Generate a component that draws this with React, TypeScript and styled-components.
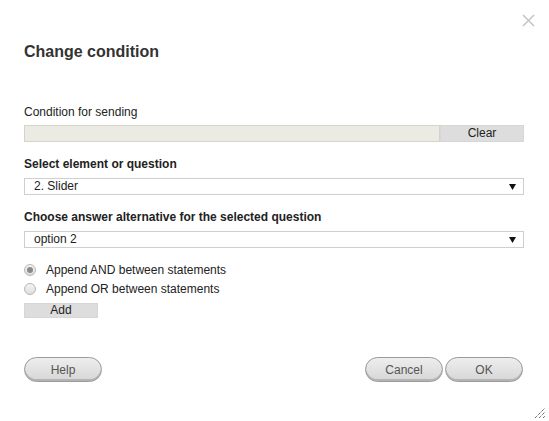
import * as React from "react";
import styled, { createGlobalStyle } from "styled-components";

const GlobalStyle = createGlobalStyle`
  html, body {
    margin: 0;
    padding: 0;
    background: #fff;
  }
  body {
    font-family: "Liberation Sans", Arial, sans-serif;
    font-size: 12px;
    color: #222;
  }
`;

const Dialog = styled.div`
  position: relative;
  box-sizing: border-box;
  width: 549px;
  height: 421px;
  padding: 42px 25px 0 24px;
  display: flex;
  flex-direction: column;
  background: #fff;
`;

const CloseButton = styled.button`
  position: absolute;
  top: 14px;
  right: 14px;
  width: 13px;
  height: 13px;
  padding: 0;
  border: 0;
  background: none;
  cursor: pointer;
`;

const Title = styled.h2`
  margin: 0;
  font-size: 16px;
  line-height: 20px;
  font-weight: bold;
  color: #333;
`;

const Label = styled.div<{ $bold?: boolean; $top: number }>`
  margin-top: ${(p) => p.$top}px;
  font-size: 12px;
  line-height: 14px;
  font-weight: ${(p) => (p.$bold ? "bold" : "normal")};
  color: #222;
`;

const ConditionRow = styled.div`
  display: flex;
  margin-top: 6px;
  height: 17px;
`;

const ConditionField = styled.input`
  flex: 1;
  box-sizing: border-box;
  height: 17px;
  margin: 0;
  border: 1px solid #d4d4cc;
  background: #ebebe4;
  outline: none;
`;

const FlatButton = styled.button<{ $width?: number }>`
  box-sizing: border-box;
  width: ${(p) => (p.$width ? `${p.$width}px` : "auto")};
  height: ${(p) => (p.$width ? "15px" : "17px")};
  margin: 0;
  padding: 0;
  border: 1px solid #d6d6d6;
  background: #dddddd;
  font-family: "Liberation Sans", Arial, sans-serif;
  font-size: 12px;
  line-height: 13px;
  color: #222;
  cursor: pointer;
`;

const SelectWrap = styled.div`
  position: relative;
  margin-top: 7px;
  height: 17px;
`;

const Select = styled.select`
  appearance: none;
  box-sizing: border-box;
  width: 100%;
  height: 17px;
  margin: 0;
  padding: 0 0 0 9px;
  border: 1px solid #cfcfcf;
  background: #fff;
  font-family: "Liberation Sans", Arial, sans-serif;
  font-size: 12px;
  line-height: 15px;
  color: #222;
  outline: none;
`;

const Arrow = styled.svg`
  position: absolute;
  right: 8px;
  top: 6px;
  pointer-events: none;
`;

const RadioGroup = styled.div`
  display: flex;
  flex-direction: column;
  gap: 5px;
  margin-top: 15px;
`;

const RadioLabel = styled.label`
  display: flex;
  align-items: center;
  height: 14px;
  font-size: 12px;
  color: #222;
  cursor: pointer;
`;

const Radio = styled.input`
  appearance: none;
  box-sizing: border-box;
  width: 12px;
  height: 12px;
  margin: 0 10px 0 0;
  border: 1px solid #b7b7b7;
  border-radius: 50%;
  background: linear-gradient(#f4f4f4, #dedede);
  display: grid;
  place-items: center;

  &:checked::after {
    content: "";
    width: 6px;
    height: 6px;
    border-radius: 50%;
    background: #8a8a8a;
  }
`;

const AddRow = styled.div`
  margin-top: 7px;
`;

const Footer = styled.div`
  display: flex;
  justify-content: space-between;
  margin-top: 39px;
  padding-right: 1px;
`;

const ButtonGroup = styled.div`
  display: flex;
  gap: 2px;
`;

const PillButton = styled.button`
  box-sizing: border-box;
  width: 78px;
  height: 25px;
  margin: 0;
  padding: 0;
  border: 1px solid #9a9a9a;
  border-radius: 13px;
  background: linear-gradient(#eeeeee, #d6d6d6);
  box-shadow: inset 0 -2px 0 #b4b4b4;
  font-family: "Liberation Sans", Arial, sans-serif;
  font-size: 12px;
  color: #555;
  cursor: pointer;
`;

const Grip = styled.svg`
  position: absolute;
  right: 3px;
  bottom: 2px;
`;

export default function App() {
  return (
    <>
      <GlobalStyle />
      <Dialog>
        <CloseButton aria-label="Close">
          <svg width="13" height="13" viewBox="0 0 13 13">
            <path d="M1 1 L12 12 M12 1 L1 12" stroke="#c4c4c4" strokeWidth="1.5" />
          </svg>
        </CloseButton>
        <Title>Change condition</Title>

        <Label $top={43}>Condition for sending</Label>
        <ConditionRow>
          <ConditionField disabled />
          <FlatButton style={{ width: 84 }}>Clear</FlatButton>
        </ConditionRow>

        <Label $bold $top={15}>Select element or question</Label>
        <SelectWrap>
          <Select defaultValue="2">
            <option value="2">2. Slider</option>
          </Select>
          <Arrow width="7" height="6" viewBox="0 0 7 6">
            <path d="M0 0 H7 L3.5 6 Z" fill="#111" />
          </Arrow>
        </SelectWrap>

        <Label $bold $top={15}>Choose answer alternative for the selected question</Label>
        <SelectWrap>
          <Select defaultValue="o2">
            <option value="o2">option 2</option>
          </Select>
          <Arrow width="7" height="6" viewBox="0 0 7 6">
            <path d="M0 0 H7 L3.5 6 Z" fill="#111" />
          </Arrow>
        </SelectWrap>

        <RadioGroup>
          <RadioLabel>
            <Radio type="radio" name="join" defaultChecked />
            Append AND between statements
          </RadioLabel>
          <RadioLabel>
            <Radio type="radio" name="join" />
            Append OR between statements
          </RadioLabel>
        </RadioGroup>

        <AddRow>
          <FlatButton $width={74}>Add</FlatButton>
        </AddRow>

        <Footer>
          <PillButton>Help</PillButton>
          <ButtonGroup>
            <PillButton>Cancel</PillButton>
            <PillButton>OK</PillButton>
          </ButtonGroup>
        </Footer>

        <Grip width="12" height="12" viewBox="0 0 12 12">
          <path d="M1 11 L11 1 M5 11 L11 5 M9 11 L11 9" stroke="#333" strokeWidth="1" strokeDasharray="1 1" />
        </Grip>
      </Dialog>
    </>
  );
}
